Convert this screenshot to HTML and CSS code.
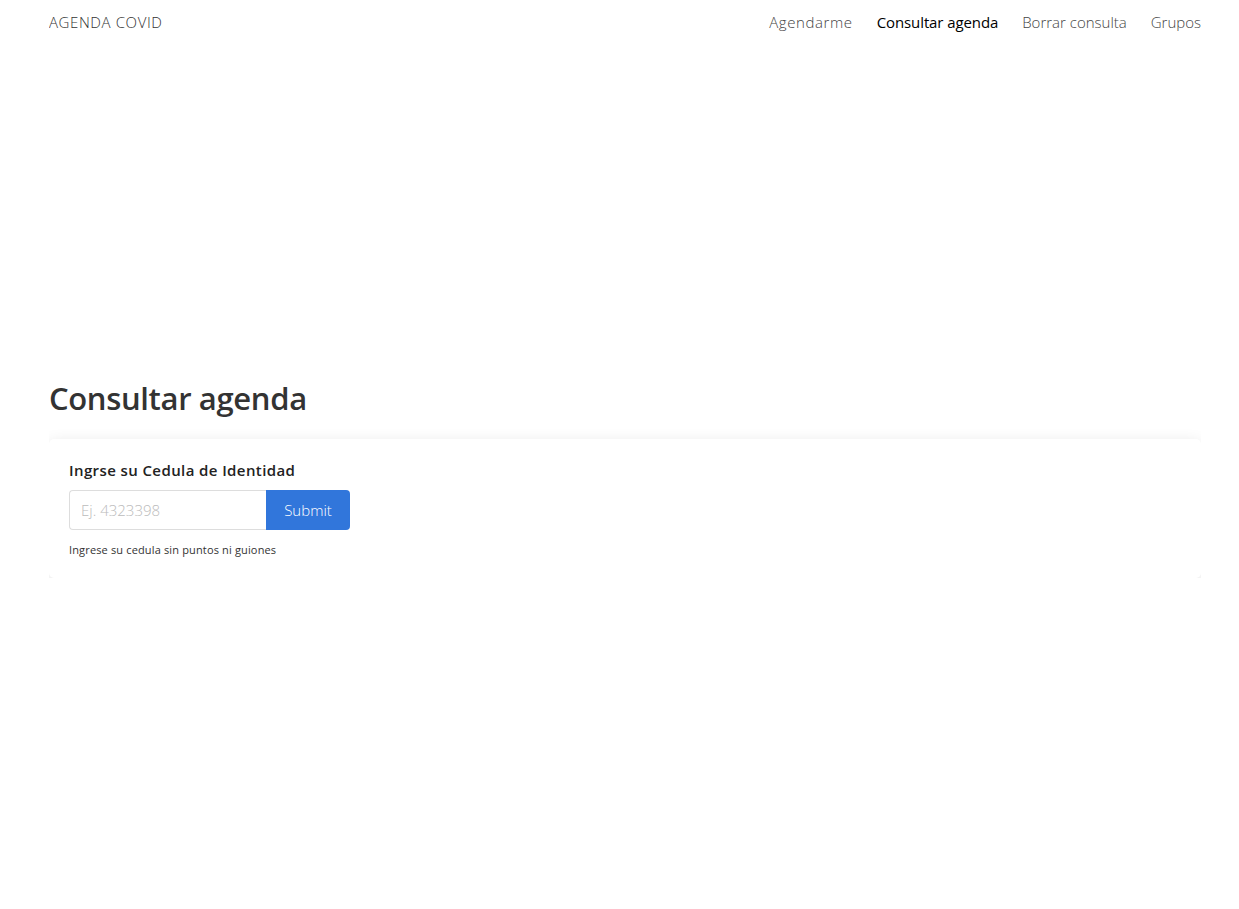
FILE: index.html
```html
<!DOCTYPE html>
<html lang="es">
<head>
<meta charset="utf-8">
<title>Agenda COVID</title>
<link rel="stylesheet" href="styles.css">
</head>
<body>
<header class="navbar">
  <a class="brand" href="#">AGENDA COVID</a>
  <nav class="nav">
    <a class="nav-link" href="#">Agendarme</a>
    <a class="nav-link active" href="#">Consultar agenda</a>
    <a class="nav-link" href="#">Borrar consulta</a>
    <a class="nav-link" href="#">Grupos</a>
  </nav>
</header>
<main class="main">
  <h1 class="title">Consultar agenda</h1>
  <section class="card">
    <label class="label" for="ci">Ingrse su Cedula de Identidad</label>
    <div class="input-group">
      <input id="ci" class="input" type="text" placeholder="Ej. 4323398">
      <button class="btn" type="button">Submit</button>
    </div>
    <p class="help">Ingrese su cedula sin puntos ni guiones</p>
  </section>
</main>
</body>
</html>
```
FILE: styles.css
```css
* { box-sizing: border-box; }
html, body { margin: 0; padding: 0; background: #fff; }
body {
  font-family: "Open Sans", "Noto Sans", "Liberation Sans", sans-serif;
  color: #212529;
  width: 1152px;
  margin-left: 49px;
}
.navbar {
  display: flex;
  justify-content: space-between;
  align-items: center;
  height: 44px;
}
.brand {
  font-size: 15px;
  font-weight: 300;
  color: #333;
  text-decoration: none;
  letter-spacing: 0.6px;
}
.nav { display: flex; gap: 24px; }
.nav-link {
  font-size: 15px;
  font-weight: 300;
  color: #444;
  text-decoration: none;
}
.nav-link:first-child { letter-spacing: 0.6px; }
.nav-link.active { color: #000; font-weight: 400; letter-spacing: -0.1px; }
.main { padding-top: 334px; }
.title {
  margin: 0 0 21px;
  font-size: 31px;
  font-weight: 600;
  color: #333;
  line-height: 40px;
  letter-spacing: -0.35px;
}
.card {
  background: #fff;
  border-radius: 5px;
  box-shadow: 0 4px 16px rgba(0,0,0,0.12);
  padding: 21px 20px 20px;
}
.label {
  display: block;
  font-size: 15px;
  font-weight: 600;
  color: #222;
  letter-spacing: 0.4px;
  line-height: 20px;
  margin-bottom: 10px;
}
.input-group { display: flex; }
.input {
  width: 197px;
  height: 40px;
  border: 1px solid #ddd;
  border-right: none;
  border-radius: 4px 0 0 4px;
  padding: 0 11px;
  font-family: inherit;
  font-size: 15px;
  font-weight: 300;
  color: #333;
  outline: none;
}
.input::placeholder { color: #bbb; }
.btn {
  width: 84px;
  height: 40px;
  border: none;
  border-radius: 0 4px 4px 0;
  background: #3176db;
  color: #fff;
  font-family: inherit;
  font-size: 15px;
  font-weight: 300;
  cursor: pointer;
}
.help {
  margin: 12px 0 0;
  font-size: 11px;
  color: #333;
  line-height: 16px;
  letter-spacing: 0.15px;
}
```
